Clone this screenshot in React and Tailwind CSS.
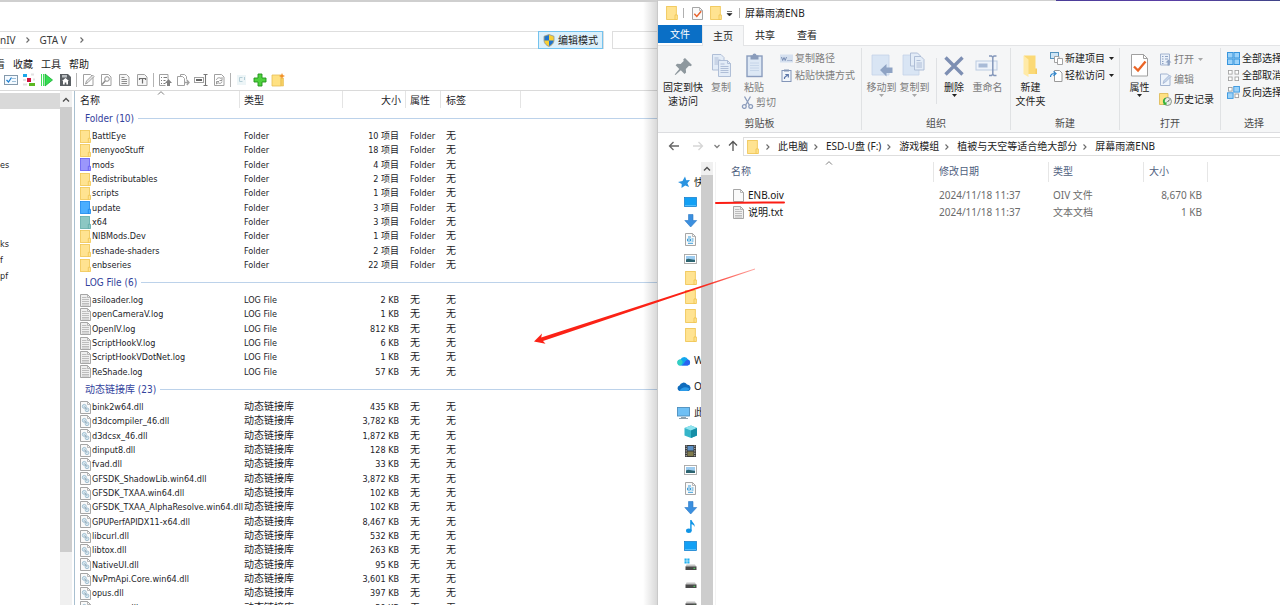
import React from "react";

/* ---------- small shared icons ---------- */

function Folder({ tone = "yellow", className = "w-[11px] h-[13px]" }) {
  const tones = {
    yellow: ["#ffe391", "#f0c552"],
    violet: ["#9a96fb", "#6259f2"],
    blue: ["#4aaeff", "#1787ee"],
    teal: ["#8cc7c3", "#5faaa8"],
  };
  const [fill, edge] = tones[tone];
  return (
    <svg className={className} viewBox="0 0 11 13" aria-hidden="true">
      <rect x="0.5" y="0.5" width="9" height="12" fill={fill} stroke={edge} strokeWidth="0.8" />
      <path d="M8.3 8.3h2.2v4.3H8.3z" fill={fill} stroke={edge} strokeWidth="0.8" />
    </svg>
  );
}

function Sheet({ kind = "text", className = "w-[11px] h-[13px]" }) {
  return (
    <svg className={className} viewBox="0 0 11 13" aria-hidden="true">
      <path d="M0.5 0.5h7L10.500 3.500v9H0.5z" fill={kind === "text" ? "#efefef" : "#fafafa"} stroke="#9c9c9c" strokeWidth="0.9" />
      <path d="M7.500 0.500v3h3" fill="none" stroke="#a8a8a8" strokeWidth="0.8" />
      {kind === "text" && <path d="M2 3.500h4.500M2 5.500h7M2 7.500h7M2 9.500h7M2 11h7" stroke="#b0b0b0" strokeWidth="0.8" />}
      {kind === "dll" && (
        <g fill="#d9eaf3" stroke="#94b6ca" strokeWidth="0.8">
          <circle cx="4.3" cy="5.4" r="2" />
          <circle cx="7" cy="8.800" r="1.900" />
          <path d="M4.300 5.400l2.700 3.400" stroke="#8f9ea8" />
        </g>
      )}
      {kind === "doc" && <path d="M3 4h3M2.500 6h3v2h-3zM6.500 6h2M6.500 8h2M3 10.300h5" fill="none" stroke="#3b9edb" strokeWidth="1" />}
      {kind === "check" && <path d="M2.300 6.800l2.500 2.600 4.400-5.200" fill="none" stroke="#e8622c" strokeWidth="1.5" />}
    </svg>
  );
}

function Chevron({ className = "w-[6px] h-[8px]" }) {
  return (
    <svg className={className} viewBox="0 0 6 8" aria-hidden="true">
      <path d="M1.5 1.5L4 4 1.5 6.5" fill="none" stroke="#6a6a6a" strokeWidth="1.1" />
    </svg>
  );
}

function UpMark({ className = "w-[8px] h-[6px]", stroke = "#505050", width = 1.4 }) {
  return (
    <svg className={className} viewBox="0 0 8 6" aria-hidden="true">
      <path d="M1 4.6L4 1.6l3 3" fill="none" stroke={stroke} strokeWidth={width} />
    </svg>
  );
}

function Caret({ color = "#222" }) {
  return (
    <svg className="w-[5px] h-[3px]" viewBox="0 0 5 3" aria-hidden="true">
      <path d="M0 0h5L2.5 3z" fill={color} />
    </svg>
  );
}

/* ---------- left window ---------- */

const page = "M2.500 1.500h7l2.500 2.500v8.500H2.500z";

function ToolIcon({ name }) {
  const g = { fill: "none", stroke: "#a0a0a0", strokeWidth: 1 };
  const art = {
    options: (
      <g>
        <rect x="0.5" y="2.500" width="13" height="9" fill="#f4faff" stroke="#8499ab" />
        <path d="M2.500 7l2 2 3-4.500" fill="none" stroke="#1f7fd0" strokeWidth="1.3" />
        <path d="M8 5.500h4M8 8.500h4" stroke="#9dbfd8" />
      </g>
    ),
    blocks: (
      <g>
        <rect x="1" y="1" width="4" height="3" fill="#1ba8e8" />
        <rect x="5" y="5" width="4" height="4" fill="#d0123e" />
        <rect x="7" y="10" width="6" height="3" fill="#5cb822" />
        <path d="M9 1.500h3M1 7h3M1 11.500h4M11 6.500h2" stroke="#e2e2e2" strokeWidth="2" />
      </g>
    ),
    play: (
      <g>
        <path d="M1.500 1v12M3.500 1v12" stroke="#3fe058" strokeWidth="1" />
        <path d="M5 1l7.500 6L5 13z" fill="#35dc50" stroke="#17ad32" strokeWidth="0.8" />
      </g>
    ),
    save: (
      <g>
        <path d="M2 1h8l3 3v9H2z" fill="#5a5f63" />
        <rect x="4" y="2" width="5" height="2.500" fill="#b9bdc0" />
        <path d="M4 8l3.500-3L11 8h-1v3.500H8.300V9.500H6.700v2H5V8z" fill="#fff" />
      </g>
    ),
    edit: (
      <g {...g}>
        <path d={page} />
        <path d="M4.500 11l1-3 6-6 1.500 1.500-6 6z" fill="#e8e8e8" stroke="#8c8c8c" strokeWidth="0.8" />
      </g>
    ),
    find: (
      <g {...g}>
        <path d={page} />
        <circle cx="8" cy="6" r="2.300" stroke="#8c8c8c" />
        <path d="M6.300 7.700L3 11.500" stroke="#8c8c8c" strokeWidth="1.400" />
      </g>
    ),
    text: (
      <g {...g}>
        <path d={page} fill="#f6f6f6" />
        <path d="M4.500 4.500h3M4.500 6.500h5.500M4.500 8.500h5.500M4.500 10.500h5.500" stroke="#8c8c8c" />
      </g>
    ),
    font: (
      <g {...g}>
        <path d={page} fill="#f6f6f6" />
        <path d="M4.500 5.500h6M4.500 5v2M10.500 5v2M7.500 5.500V10.500" stroke="#6c6c6c" strokeWidth="1.200" />
      </g>
    ),
    exportList: (
      <g {...g}>
        <path d="M1.500 12.500v-11h8.500v5M1.500 12.500h6" />
        <path d="M3 4.500h1M5.500 4.500h3.500M3 7.500h1M5.500 7.500h2M3 10.500h1M5.500 10.500h2" stroke="#7a7a7a" />
        <path d="M10.500 6l3.500 4h-2v3H9v-3H7z" fill="#808080" stroke="none" />
      </g>
    ),
    copyTo: (
      <g {...g}>
        <path d="M1.500 3.500h5l2 2v7h-7z" />
        <path d="M4.500 3V1.500h4l2 2v3" />
        <path d="M8 9.500h5M10.800 7l2.200 2.500-2.200 2.500" strokeWidth="1.400" />
      </g>
    ),
    rename: (
      <g {...g}>
        <rect x="0.5" y="4.500" width="9" height="5" />
        <rect x="2" y="6" width="6" height="2" fill="#666" stroke="none" />
        <path d="M9.500 1.500h4M11.500 1.500v11M9.500 12.500h4" stroke="#777" strokeWidth="1.100" />
      </g>
    ),
    refresh: (
      <g {...g}>
        <path d={page} />
        <path d="M4.500 7c0-2 3-3 4.500-1.500L10 4.500v3H7.500M10 8.500c0 1.700-2.500 2.500-4 1.200L4.500 11V8.500h2.500" stroke="#8c8c8c" strokeWidth="0.9" />
      </g>
    ),
    faded: (
      <g>
        <rect x="2" y="2" width="9" height="10" fill="#edf5f7" />
        <path d="M7.500 4.500h-3v4h3M9.500 4v3" fill="none" stroke="#b5ced7" />
      </g>
    ),
    add: <path d="M5 1h4v4h4v4H9v4H5V9H1V5h4z" fill="#4fd13e" stroke="#21921b" strokeWidth="0.9" />,
    newFolder: (
      <g>
        <path d="M1 2h9v11H1z" fill="#ffe182" stroke="#e6be55" strokeWidth="0.8" />
        <path d="M10 5h2.500v8H10z" fill="#f6cf62" stroke="#e6be55" strokeWidth="0.6" />
        <path d="M11 0l.9 2.100 2.100.9-2.100.9L11 6l-.9-2.100L8 3l2.100-.9z" fill="#f2922a" />
      </g>
    ),
  };
  return (
    <svg className="w-[14px] h-[14px]" viewBox="0 0 14 14" aria-hidden="true">
      {art[name]}
    </svg>
  );
}

const toolGroups = [
  [["options", "选项"], ["blocks", "归档"], ["play", "运行"], ["save", "保存"]],
  [["edit", "编辑"], ["find", "查看"], ["text", "文本"], ["font", "字体"]],
  [["exportList", "导出"], ["copyTo", "复制"], ["rename", "重命名"], ["refresh", "替换"]],
  [["faded", "属性"], ["add", "添加"], ["newFolder", "新建文件夹"]],
];

const groups = [
  {
    title: "Folder (10)",
    type: "Folder",
    attr: "Folder",
    rows: [
      ["BattlEye", "10 项目"],
      ["menyooStuff", "18 项目"],
      ["mods", "4 项目", "violet"],
      ["Redistributables", "2 项目"],
      ["scripts", "1 项目"],
      ["update", "3 项目", "blue"],
      ["x64", "3 项目", "teal"],
      ["NIBMods.Dev", "1 项目"],
      ["reshade-shaders", "2 项目"],
      ["enbseries", "22 项目"],
    ],
  },
  {
    title: "LOG File (6)",
    type: "LOG File",
    attr: "无",
    icon: "text",
    rows: [
      ["asiloader.log", "2 KB"],
      ["openCameraV.log", "1 KB"],
      ["OpenIV.log", "812 KB"],
      ["ScriptHookV.log", "6 KB"],
      ["ScriptHookVDotNet.log", "1 KB"],
      ["ReShade.log", "57 KB"],
    ],
  },
  {
    title: "动态链接库 (23)",
    type: "动态链接库",
    attr: "无",
    icon: "dll",
    rows: [
      ["bink2w64.dll", "435 KB"],
      ["d3dcompiler_46.dll", "3,782 KB"],
      ["d3dcsx_46.dll", "1,872 KB"],
      ["dinput8.dll", "128 KB"],
      ["fvad.dll", "33 KB"],
      ["GFSDK_ShadowLib.win64.dll", "3,872 KB"],
      ["GFSDK_TXAA.win64.dll", "102 KB"],
      ["GFSDK_TXAA_AlphaResolve.win64.dll", "102 KB"],
      ["GPUPerfAPIDX11-x64.dll", "8,467 KB"],
      ["libcurl.dll", "532 KB"],
      ["libtox.dll", "263 KB"],
      ["NativeUI.dll", "95 KB"],
      ["NvPmApi.Core.win64.dll", "3,601 KB"],
      ["opus.dll", "397 KB"],
      ["opusenc.dll", "59 KB"],
    ],
  },
];

function cellFont(text) {
  return /[\u4e00-\u9fff]/.test(text) ? "text-[10px]" : "text-[9px]";
}

function ArchiveTable() {
  const head = "h-[17px] p-0 font-normal text-[10px] text-left border-r border-[#e4e4e4]";
  return (
    <table className="w-full table-fixed border-separate border-spacing-0 leading-[14px] text-[#1c1c28] whitespace-nowrap">
      <colgroup>
        <col className="w-[165px]" />
        <col className="w-[103px]" />
        <col className="w-[63px]" />
        <col className="w-[35px]" />
        <col className="w-[80px]" />
        <col />
      </colgroup>
      <thead>
        <tr>
          <th className={head}>
            <div className="relative pl-[5px] pt-[3px]">
              名称
              <UpMark className="absolute left-1/2 top-0 -mt-[1px] w-[8px] h-[6px]" stroke="#808080" width={1} />
            </div>
          </th>
          <th className={head}><div className="pl-[4px] pt-[3px]">类型</div></th>
          <th className={head}><div className="pr-[4px] pt-[3px] text-right">大小</div></th>
          <th className={head}><div className="pl-[4px] pt-[3px]">属性</div></th>
          <th className={head}><div className="pl-[5px] pt-[3px]">标签</div></th>
          <th className="p-0" aria-hidden="true" />
        </tr>
      </thead>
      {groups.map((g) => (
        <React.Fragment key={g.title}>
          <tbody>
            <tr>
              <th colSpan={6} className="h-[21px] p-0 font-normal text-left">
                <div className="flex items-center gap-[4px] pl-[10px] text-[10px] text-[#32429c]">
                  {g.title}
                  <span className="flex-1 h-px bg-[#bcd2ea]" />
                </div>
              </th>
            </tr>
          </tbody>
          <tbody>
            {g.rows.map(([name, size, tone]) => (
              <tr key={name} className="h-[14px] nth-[3n]:h-[15px]">
                <td className="p-0">
                  <div className="flex items-center gap-[1px] pl-[5px] h-[14px] text-[9px]">
                    {g.icon ? <Sheet kind={g.icon} className="w-[11px] h-[13px] shrink-0" /> : <Folder tone={tone} className="w-[11px] h-[13px] shrink-0" />}
                    {name}
                  </div>
                </td>
                <td className="p-0"><div className={`h-[14px] pl-[4px] ${cellFont(g.type)}`}>{g.type}</div></td>
                <td className="p-0"><div className="h-[14px] pr-[7px] text-right text-[9px]">{size}</div></td>
                <td className="p-0"><div className={`h-[14px] pl-[4px] ${cellFont(g.attr)}`}>{g.attr}</div></td>
                <td className="p-0"><div className="h-[14px] pl-[5px] text-[10px]">无</div></td>
                <td className="p-0" />
              </tr>
            ))}
          </tbody>
        </React.Fragment>
      ))}
    </table>
  );
}

function Shield() {
  return (
    <svg className="w-[12px] h-[13px]" viewBox="0 0 12 13" aria-hidden="true">
      <path d="M6 0.500l5 1.800v4c0 3-2.200 5-5 6.200C3.200 11.300 1 9.300 1 6.300v-4z" fill="#f8cf34" stroke="#8d949b" strokeWidth="0.8" />
      <path d="M6 1v5.500H1.400V2.600z" fill="#1f74cf" />
      <path d="M6 6.500h4.600C10.400 9 8.500 11 6 12z" fill="#1f74cf" />
    </svg>
  );
}

function LeftWindow() {
  return (
    <section className="relative flex min-w-0 flex-col overflow-hidden border-t-2 border-[#cfcfcf] bg-white font-['DejaVu_Sans_Condensed','Noto_Sans_CJK_SC',sans-serif]">
      <div className="mt-[29px] flex h-[18px] shrink-0 gap-[8px] font-['Noto_Sans','Noto_Sans_CJK_SC',sans-serif] text-[10px] text-[#3a3a3a]">
        <div className="flex min-w-0 flex-1 items-stretch border-y border-r border-[#dedede]">
          <nav aria-label="路径" className="flex flex-1 items-center gap-[9px]">
            <a href="#openiv">nIV</a>
            <Chevron />
            <span className="flex items-center gap-[12px]">
              <a href="#gtav">GTA V</a>
              <Chevron />
            </span>
          </nav>
          <button className="-my-px flex items-center gap-[3px] border border-[#74c3ee] bg-[#dcf0fb] px-[4px] text-[#222]">
            <Shield />
            编辑模式
          </button>
        </div>
        <input aria-label="搜索" className="w-[45px] border-y border-l border-[#dedede] outline-none" />
      </div>

      <div className="mt-[7px] flex h-[16px] shrink-0 items-center gap-[8px] text-[10px] text-[#1a1a1a]">
        <button className="-ml-[5px]">看</button>
        <button>收藏</button>
        <button>工具</button>
        <button>帮助</button>
      </div>

      <div className="flex h-[19px] shrink-0 items-start border-b border-[#dadada] pl-[2px] pt-[1px]">
        {toolGroups.map((group, i) => (
          <React.Fragment key={i}>
            {i > 0 && <span className="mx-[2px] h-[14px] w-px bg-[#b3b3b3]" />}
            {group.map(([name, label]) => (
              <button key={name} aria-label={label} className="flex w-[18px] justify-center">
                <ToolIcon name={name} />
              </button>
            ))}
          </React.Fragment>
        ))}
      </div>

      <div className="flex min-h-0 flex-1">
        <ul className="w-[60px] shrink-0 pt-[2px] text-[9px] leading-[16px] text-[#1c1c28]">
          <li className="mb-[48px] h-[16px] bg-[#d9d9d9]" />
          <li className="mb-[63px]">es</li>
          <li>ks</li>
          <li>f</li>
          <li>pf</li>
        </ul>
        <div className="flex w-[12px] shrink-0 flex-col bg-[#f0f0f0] pt-[2px]">
          <div className="flex h-[14px] shrink-0 items-center justify-center">
            <UpMark />
          </div>
          <div className="h-[87%] bg-[#cdcdcd]" />
        </div>
        <div className="ml-[2px] min-w-0 flex-1 overflow-hidden border-l border-[#a9c0d0]">
          <ArchiveTable />
        </div>
      </div>
      <div className="pointer-events-none absolute inset-y-0 right-0 w-[14px] bg-linear-to-r from-transparent to-black/15" />
    </section>
  );
}

/* ---------- right window: ribbon ---------- */

const pageFill = "#e3ecf7";
const pageEdge = "#a9b9d3";

function Copies({ x = 0, y = 0 }) {
  return (
    <g transform={`translate(${x} ${y})`} fill={pageFill} stroke={pageEdge} strokeWidth="0.9">
      <path d="M0.500 0.500h8.500l3 3v12.500H0.500z" />
      <path d="M2.500 4h4M2.500 6h6M2.500 8h6M2.500 10h6" />
      <path d="M6.500 6.500h9l3 3V22.500h-12z" />
      <path d="M15.500 6.500v3h3M8.500 10h4M8.500 12.500h8M8.500 14.500h8M8.500 16.500h8M8.500 18.500h8" fill="none" />
    </g>
  );
}

function RibbonIcon({ name }) {
  const art = {
    pin: (
      <g transform="translate(0 3)">
        <path d="M14 3l7 7-1.500 1.200-1.500-.4-3.200 3.200.3 3.400-1.600 1.600-3.700-3.700L4.500 20l-.8-.6 4.600-5.500-3.700-3.600 1.600-1.600 3.400.3 3.100-3.100-.4-1.600z" fill="#8e989e" />
      </g>
    ),
    copy: <Copies x={3} y={2} />,
    paste: (
      <g>
        <rect x="5" y="4" width="15" height="20.500" fill="#dde8f5" stroke="#8b9dbe" strokeWidth="1.400" />
        <path d="M8.500 3.500h2a2 2 0 014 0h2v4h-8z" fill="#8a9cbb" />
        <path d="M8 11h9M8 13.500h9M8 16h9M8 18.500h9" stroke="#c2d1e6" strokeWidth="0.800" />
      </g>
    ),
    moveTo: (
      <g>
        <path d="M3 3h17v20H3z" fill="#d9e5f4" stroke="#c4d3e8" strokeWidth="0.800" />
        <path d="M11 18l6.500-6v3.500h6v5.500h-6v3.500z" fill="#8fa3c4" />
      </g>
    ),
    copyTo: (
      <g>
        <path d="M1 3h16v20H1z" fill="#d9e5f4" stroke="#c4d3e8" strokeWidth="0.800" />
        <g fill={pageFill} stroke={pageEdge} strokeWidth="0.900">
          <path d="M8.500 1h7l3 3v10h-10z" />
          <path d="M12.500 4.500h6.500l3 3V18h-9.500z" />
          <path d="M14.500 8.500h4M14.500 11h5.500M14.500 13h5.500M14.500 15h5.500" />
        </g>
      </g>
    ),
    remove: <path d="M3.500 5.500l17 17M20.500 5.500l-17 17" stroke="#7d8fb3" strokeWidth="3.400" />,
    rename: (
      <g fill="none">
        <rect x="1" y="9" width="21" height="9" fill="#eef3fa" stroke="#bccbe2" />
        <rect x="3.500" y="11.500" width="9" height="4" fill="#a9bbd7" />
        <path d="M14 4h2.500l1.300 1.200L19 4h2.500M17.800 5v17M14 23.500h2.500l1.300-1.200 1.200 1.200h2.500" stroke="#8497ba" strokeWidth="1.500" />
      </g>
    ),
    newFolder: (
      <g>
        <path d="M16 16.500h3V22h-3z" fill="#f5cc62" />
        <path d="M6 3.500h11.500V22H9z" fill="#fbd976" />
        <path d="M5.500 3.500l5 4V25l-5-3z" fill="#ffeaa8" />
      </g>
    ),
    properties: (
      <g>
        <path d="M4.500 2.500h12l4 4v17.500h-16z" fill="#fff" stroke="#a0a0a0" />
        <path d="M16.500 2.500v4h4" fill="none" stroke="#a0a0a0" />
        <path d="M7 14.500l4 4 7.500-9" fill="none" stroke="#ea6425" strokeWidth="2.300" />
      </g>
    ),
  };
  return (
    <svg className="w-[25px] h-[28px] shrink-0" viewBox="0 0 25 28" aria-hidden="true">
      {art[name]}
    </svg>
  );
}

function MiniIcon({ name }) {
  const art = {
    path: (
      <g>
        <rect x="0" y="2.500" width="13" height="8" fill="#d5e0ef" />
        <path d="M1.500 5l1.200 3.500L4 5.500l1.200 3L6.500 5M7.500 8.500h1M9.500 8.500h1M11.300 8.500h.8" fill="none" stroke="#6f86ae" strokeWidth="0.900" />
      </g>
    ),
    shortcut: (
      <g>
        <rect x="2" y="1.500" width="9" height="11" fill="#f2f6fb" stroke="#8496b8" />
        <rect x="4" y="0.500" width="5" height="2" fill="#8496b6" />
        <path d="M4.500 10V8.500L7.500 6M5.300 5.500h3v3" fill="none" stroke="#5c76a8" strokeWidth="1.200" />
      </g>
    ),
    cut: (
      <g fill="none" stroke="#8b9cbc">
        <path d="M3.500 0.500l4.800 8.500M9.500 0.500L4.700 9" strokeWidth="1.300" />
        <circle cx="3.300" cy="10.500" r="1.900" strokeWidth="1.300" />
        <circle cx="9.700" cy="10.500" r="1.900" strokeWidth="1.300" />
      </g>
    ),
    newItem: (
      <g>
        <rect x="0.500" y="0.500" width="8" height="6" fill="#cfe6f6" stroke="#5593bd" />
        <path d="M4.500 4.500h4.500v6h-4.500z" fill="#fff" stroke="#9a9a9a" strokeWidth="0.900" />
        <path d="M7.500 6.500h5v6h-5z" fill="#fff" stroke="#9a9a9a" strokeWidth="0.900" />
      </g>
    ),
    easy: (
      <g>
        <path d="M4.500 1.500h5l2.500 2.500v8.500H4.500z" fill="#fff" stroke="#9a9a9a" />
        <path d="M0.500 8c0-2.500 1-3.500 4-3.500M3.500 2.500l2.500 2-2.500 2.200" fill="none" stroke="#2c86cf" strokeWidth="1.200" />
      </g>
    ),
    open: (
      <g>
        <path d="M1.500 1h9v11h-9z" fill="#e9f0f9" stroke="#a3b4d0" />
        <path d="M3 3.500h1.500M6 3.500h3M3 6h1.500M6 6h3M3 8.500h1.500M3 10.500h1.500" stroke="#8fa3c4" />
        <path d="M9.500 6.500l3 3h-2v3h-2v-3h-2z" fill="#8fa3c4" />
      </g>
    ),
    edit: (
      <g>
        <path d="M1.500 1h7l2.500 2.500V12.500H1.500z" fill="#eef4fb" stroke="#a3b4d0" />
        <path d="M4 10.500l1-3 5.500-5.500 1.500 1.500-5.500 5.500z" fill="#c7d6eb" stroke="#a3b4d0" strokeWidth="0.800" />
      </g>
    ),
    history: (
      <g>
        <path d="M0.500 0.500h8.500v11H0.500z" fill="#ffe182" stroke="#dcb64e" strokeWidth="0.800" />
        <circle cx="8.500" cy="8.500" r="4" fill="#e6ebe6" stroke="#828c82" strokeWidth="0.900" />
        <path d="M8.500 9l2.200-2.500" fill="none" stroke="#555" strokeWidth="1" />
        <path d="M6.500 4.800C3.500 6 3.300 9 5 11l-1.200.8h3.700V8.600L6.300 9.700C5.500 8.500 5.500 6.500 7 5.700z" fill="#36b33a" />
      </g>
    ),
    all: (
      <g fill="#9bd2f9" stroke="#3795dd">
        <rect x="0.500" y="0.500" width="5.500" height="5.500" />
        <rect x="7" y="0.500" width="5.500" height="5.500" />
        <rect x="0.500" y="7" width="5.500" height="5.500" />
        <rect x="7" y="7" width="5.500" height="5.500" />
      </g>
    ),
    none: (
      <g fill="#fff" stroke="#9c9c9c" strokeWidth="0.800">
        <rect x="1.500" y="1.500" width="3.600" height="3.600" />
        <rect x="8" y="1.500" width="3.600" height="3.600" />
        <rect x="1.500" y="8" width="3.600" height="3.600" />
        <rect x="8" y="8" width="3.600" height="3.600" />
      </g>
    ),
    invert: (
      <g strokeWidth="0.900">
        <rect x="1.500" y="1.500" width="3.600" height="3.600" fill="#fff" stroke="#9c9c9c" />
        <rect x="6.800" y="0.500" width="5.600" height="5.600" fill="#9bd2f9" stroke="#3795dd" />
        <rect x="0.500" y="6.800" width="5.600" height="5.600" fill="#9bd2f9" stroke="#3795dd" />
        <rect x="8" y="8" width="3.600" height="3.600" fill="#fff" stroke="#9c9c9c" />
      </g>
    ),
  };
  return (
    <svg className="w-[13px] h-[13px] shrink-0" viewBox="0 0 13 13" aria-hidden="true">
      {art[name]}
    </svg>
  );
}

function Big({ icon, lines, width, muted, caret }) {
  return (
    <button className={`mt-[2px] flex flex-col items-center ${width} ${muted ? "text-[#7d7d7d]" : "text-[#222]"}`}>
      <RibbonIcon name={icon} />
      {lines.map((l) => (
        <span key={l} className="leading-[14px]">{l}</span>
      ))}
      {caret && <Caret color={muted ? "#a8a8a8" : "#222"} />}
    </button>
  );
}

function Small({ icon, label, muted, caret }) {
  return (
    <button className={`flex h-[17px] items-center gap-[2px] ${muted ? "text-[#7d7d7d]" : "text-[#222]"}`}>
      <MiniIcon name={icon} />
      {label}
      {caret && <span className="ml-[2px]"><Caret color={muted ? "#a8a8a8" : "#222"} /></span>}
    </button>
  );
}

function RibbonGroup({ title, width, children }) {
  return (
    <div className={`flex shrink-0 flex-col ${width}`}>
      <div className="flex h-[66px] items-start pt-[2px]">{children}</div>
      <div className="pt-[3px] text-center leading-[14px] text-[#4c4c4c]">{title}</div>
    </div>
  );
}

function Ribbon() {
  return (
    <div className="flex h-[87px] shrink-0 overflow-hidden whitespace-nowrap border-b border-[#dcdde0] bg-[#f5f6f7]">
      <div className="flex py-[2px] divide-x divide-[#e0e2e4]">
        <RibbonGroup title="剪贴板" width="w-[204px]">
          <Big icon="pin" lines={["固定到快", "速访问"]} width="w-[50px]" />
          <Big icon="copy" lines={["复制"]} width="w-[26px]" muted />
          <div className="ml-[7px] flex w-[39px] flex-col items-start">
            <Big icon="paste" lines={["粘贴"]} width="w-[26px]" muted />
            <Small icon="cut" label="剪切" muted />
          </div>
          <div className="flex flex-col">
            <Small icon="path" label="复制路径" muted />
            <Small icon="shortcut" label="粘贴快捷方式" muted />
          </div>
        </RibbonGroup>
        <RibbonGroup title="组织" width="w-[149px]">
          <div className="flex pl-[3px]">
            <Big icon="moveTo" lines={["移动到"]} width="w-[33px]" muted caret />
            <Big icon="copyTo" lines={["复制到"]} width="w-[33px]" muted caret />
          </div>
          <span className="ml-[5px] mt-[8px] h-[46px] w-px bg-[#dfe1e4]" />
          <Big icon="remove" lines={["删除"]} width="w-[34px]" caret />
          <Big icon="rename" lines={["重命名"]} width="w-[33px]" muted />
        </RibbonGroup>
        <RibbonGroup title="新建" width="w-[109px]">
          <Big icon="newFolder" lines={["新建", "文件夹"]} width="w-[39px]" />
          <div className="flex flex-col">
            <Small icon="newItem" label="新建项目" caret />
            <Small icon="easy" label="轻松访问" caret />
          </div>
        </RibbonGroup>
        <RibbonGroup title="打开" width="w-[101px]">
          <Big icon="properties" lines={["属性"]} width="w-[39px]" caret />
          <div className="flex flex-col gap-[3px] pt-[1px]">
            <Small icon="open" label="打开" muted caret />
            <Small icon="edit" label="编辑" muted />
            <Small icon="history" label="历史记录" />
          </div>
        </RibbonGroup>
        <RibbonGroup title="选择" width="w-[66px]">
          <div className="flex flex-col pl-[6px]">
            <Small icon="all" label="全部选择" />
            <Small icon="none" label="全部取消" />
            <Small icon="invert" label="反向选择" />
          </div>
        </RibbonGroup>
      </div>
    </div>
  );
}

/* ---------- right window: navigation and files ---------- */

function NavIcon({ name }) {
  const art = {
    star: <path d="M9 1.500l1.300 3.800 3.700-.3-2.600 3.200 1.700 3.800-3.900-1.500L5.500 13l.2-4L2 7l4.500-.9z" fill="#2a93e0" />,
    desktop: (
      <g>
        <rect x="1.500" y="3.500" width="12" height="9" fill="#12a0f5" stroke="#0c78c8" strokeWidth="0.700" />
        <path d="M2 11.500h11" stroke="#5fc3fb" strokeWidth="0.800" />
      </g>
    ),
    down: <path d="M5.500 1.500h4.500v6h3.700L7.700 14 1.800 7.500h3.700z" fill="#3a8fdf" stroke="#2b78c4" strokeWidth="0.600" />,
    picture: (
      <g>
        <rect x="1.500" y="3.500" width="12" height="9" fill="#fff" stroke="#a6a6a6" strokeWidth="0.900" />
        <rect x="3" y="5" width="9" height="6" fill="#9dccf0" />
        <path d="M3 11V8.500c3-2 5 .5 9 .2V11z" fill="#2c6470" />
      </g>
    ),
    cloudA: (
      <g>
        <path d="M4.500 12.500A3 3 0 014.500 6.500 4 4 0 0112 6.500 3.100 3.100 0 0111.500 12.500z" fill="#12a6ee" />
        <path d="M4.500 12.500c4 0 4-5.500 7.500-6A3.100 3.100 0 0111.500 12.500z" fill="#2a63f0" />
        <path d="M4.500 12.500a3 3 0 01-.4-6c3 .4 3.500 3.500 .4 6z" fill="#33d0c0" />
      </g>
    ),
    cloudB: (
      <g>
        <path d="M3.500 12A2.900 2.900 0 013.500 6.500 4.200 4.200 0 0111 5.500a3.400 3.400 0 011.500 6.500z" fill="#0f6cbd" />
        <path d="M3.500 12c2-4 6-4.500 10-2.500a2.600 2.600 0 01-2.500 2.500z" fill="#2a9ae8" />
      </g>
    ),
    pc: (
      <g>
        <rect x="1.500" y="2.500" width="12" height="8.500" fill="#6fc0f5" stroke="#4d8fbd" strokeWidth="0.900" />
        <path d="M5 12.500h5M3 13.500h9" stroke="#8fa1ad" strokeWidth="1" />
      </g>
    ),
    cube: (
      <g>
        <path d="M1.500 4L8 1.500 14 4v7.500L8 14 1.500 11.500z" fill="#35b5c9" />
        <path d="M1.500 4L8 6.500 14 4 8 1.500z" fill="#8fe3ee" />
        <path d="M8 6.500V14l6-2.500V4z" fill="#168ea6" />
      </g>
    ),
    video: (
      <g>
        <rect x="2" y="2" width="11" height="12" fill="#3a3a3a" />
        <rect x="4.500" y="3" width="6" height="4.500" fill="#5b8fc4" />
        <rect x="4.500" y="8.500" width="6" height="4.500" fill="#7f7a4d" />
        <path d="M3.200 2.500v11M11.800 2.500v11" stroke="#ddd" strokeWidth="0.900" strokeDasharray="1.200 1.200" />
      </g>
    ),
    music: (
      <g>
        <ellipse cx="5.800" cy="11.800" rx="2.800" ry="2.200" fill="#0f94e6" />
        <path d="M7.200 1h1.400c.2 2.500 3.600 3 3 7-.7-2-1.700-2.600-3-2.800V12H7.200z" fill="#0f94e6" />
      </g>
    ),
    system: (
      <g>
        <path d="M1.500 1.500h2.200v2.200H1.500zM4.300 1.500h2.200v2.200H4.300zM1.500 4.300h2.200v2.200H1.500zM4.300 4.300h2.200v2.200H4.300z" fill="#1fb0f0" />
        <path d="M3.500 7.500h8.500l1.500 2.500h-11z" fill="#c4c4c4" />
        <rect x="2.500" y="9.500" width="11" height="3.500" fill="#4a4a4a" />
        <rect x="10.500" y="10.800" width="1.600" height="1" fill="#52e060" />
      </g>
    ),
    drive: (
      <g>
        <path d="M3.500 6.500h8.500l1.500 2.500h-11z" fill="#c4c4c4" />
        <rect x="2.500" y="8.500" width="11" height="3.500" fill="#4a4a4a" />
        <rect x="10.500" y="9.800" width="1.600" height="1" fill="#52e060" />
      </g>
    ),
  };
  if (name === "folder") return <span className="flex w-[15px] justify-center"><Folder className="w-[12px] h-[14px]" /></span>;
  if (name === "doc") return <span className="flex w-[15px] justify-center"><Sheet kind="doc" className="w-[11px] h-[13px]" /></span>;
  return (
    <svg className="w-[15px] h-[15px] shrink-0" viewBox="0 0 15 15" aria-hidden="true">
      {art[name]}
    </svg>
  );
}

const navTree = [
  { icon: "star", label: "快", children: ["desktop", "down", "doc", "picture", "folder", "folder", "folder", "folder"] },
  { icon: "cloudA", label: "W", children: [] },
  { icon: "cloudB", label: "O", children: [] },
  { icon: "pc", label: "此", children: ["cube", "video", "picture", "doc", "down", "music", "desktop", "system", "drive", "drive"] },
];

function NavPane() {
  return (
    <ul className="flex w-[43px] shrink-0 flex-col gap-[7px] overflow-hidden pt-[11px] text-[10px] text-[#222]">
      {navTree.map((n) => (
        <li key={n.label} className="shrink-0">
          <div className="flex h-[19px] items-center gap-[3px] overflow-hidden pl-[18px]">
            <NavIcon name={n.icon} />
            <span className="whitespace-nowrap">{n.label}</span>
          </div>
          <ul>
            {n.children.map((c, i) => (
              <li key={i} className="flex h-[19px] items-center pl-[25px]">
                <NavIcon name={c} />
              </li>
            ))}
          </ul>
        </li>
      ))}
    </ul>
  );
}

function FileTable() {
  const th = "p-0 h-[25px] align-top font-normal text-left";
  const cell = "h-[20px] border-r border-[#e6e6e6] leading-[19px]";
  return (
    <table className="w-full table-fixed border-separate border-spacing-0 text-[10px] text-[#6b6b6b] whitespace-nowrap">
      <colgroup>
        <col className="w-[218px]" />
        <col className="w-[115px]" />
        <col className="w-[95px]" />
        <col className="w-[64px]" />
        <col />
      </colgroup>
      <thead className="text-[#4f6080]">
        <tr>
          <th className={th}>
            <div className={`${cell} relative pl-[15px]`}>
              名称
              <UpMark className="absolute left-1/2 -top-[2px] w-[8px] h-[6px]" stroke="#808080" width={1} />
            </div>
          </th>
          <th className={th}><div className={`${cell} pl-[5px]`}>修改日期</div></th>
          <th className={th}><div className={`${cell} pl-[4px]`}>类型</div></th>
          <th className={th}><div className={`${cell} pl-[5px]`}>大小</div></th>
          <th className={th} aria-hidden="true" />
        </tr>
      </thead>
      <tbody>
        {[
          ["ENB.oiv", "OIV 文件", "8,670 KB", "blank"],
          ["说明.txt", "文本文档", "1 KB", "text"],
        ].map(([name, type, size, kind]) => (
          <tr key={name} className="h-[17px] leading-[17px]">
            <td className="p-0">
              <div className="flex h-[17px] items-center gap-[4px] pl-[17px] text-[#161616]">
                <Sheet kind={kind} />
                {name}
              </div>
            </td>
            <td className="p-0 pl-[5px]">2024/11/18 11:37</td>
            <td className="p-0 pl-[4px]">{type}</td>
            <td className="p-0 pr-[6px] text-right">{size}</td>
            <td className="p-0" />
          </tr>
        ))}
      </tbody>
    </table>
  );
}

function RightWindow() {
  const crumbs = ["此电脑", "ESD-U盘 (F:)", "游戏模组", "植被与天空等适合绝大部分", "屏幕雨滴ENB"];
  return (
    <section className="flex min-w-0 flex-col overflow-hidden border-l border-[#c9c9c9] bg-white font-['Noto_Sans','Noto_Sans_CJK_SC',sans-serif] text-[10px] text-[#222]">
      <div className="flex h-px shrink-0">
        <span className="w-[64%] bg-[#cfcfcf]" />
        <span className="flex-1 bg-linear-to-r from-[#4a3d98] via-[#5b3fa6] to-[#3f4488]" />
      </div>
      <header className="flex h-[24px] shrink-0 items-center pl-[8px]">
        <Folder className="w-[12px] h-[14px]" />
        <span className="ml-[5px] h-[10px] w-px bg-[#b0b0b0]" />
        <Sheet kind="check" className="ml-[8px] w-[11px] h-[13px]" />
        <Folder className="ml-[7px] w-[12px] h-[14px]" />
        <button aria-label="自定义快速访问工具栏" className="ml-[4px]">
          <svg className="w-[7px] h-[7px]" viewBox="0 0 7 7" aria-hidden="true">
            <path d="M1 1.500h5M1 3.500h5L3.500 6z" fill="#222" stroke="#222" strokeWidth="0.600" />
          </svg>
        </button>
        <span className="ml-[6px] h-[10px] w-px bg-[#b0b0b0]" />
        <h1 className="ml-[5px]">屏幕雨滴ENB</h1>
      </header>
      <nav aria-label="功能区" className="flex h-[21px] shrink-0 border-b border-[#e3e4e6] leading-[19px]">
        <button className="mb-[2px] w-[44px] bg-[#0a6fc6] text-white">文件</button>
        <button className="-mb-px w-[42px] border-x border-t border-[#e3e4e6] bg-[#f5f6f7]">主页</button>
        <button className="w-[42px]">共享</button>
        <button className="w-[42px]">查看</button>
      </nav>
      <Ribbon />
      <div className="flex h-[29px] shrink-0 pt-[4px]">
        <div className="flex h-[18px] w-[85px] shrink-0 items-center pl-[10px]">
          {[
            ["后退", "M11 6H1.500M5.500 2L1.500 6l4 4", "#666", "w-[24px]"],
            ["前进", "M1 6h9.500M6.500 2l4 4-4 4", "#d6d6d6", "w-[19px]"],
            ["最近浏览的位置", "M3.500 5L6 7.500 8.500 5", "#808080", "w-[16px]"],
            ["上移", "M6 11V1.500M2 5.500l4-4 4 4", "#555", "w-[16px]"],
          ].map(([label, d, color, width]) => (
            <button key={label} aria-label={label} className={width}>
              <svg className="w-[12px] h-[12px]" viewBox="0 0 12 12" aria-hidden="true">
                <path d={d} fill="none" stroke={color} strokeWidth="1.300" />
              </svg>
            </button>
          ))}
        </div>
        <nav aria-label="地址" className="flex h-[19px] min-w-0 flex-1 items-center overflow-hidden whitespace-nowrap border-y border-l border-[#dedede] pl-[3px]">
          <Folder className="mr-[1px] w-[12px] h-[14px] shrink-0" />
          {crumbs.map((c) => (
            <span key={c} className="flex items-center">
              <Chevron className="mx-[5px] h-[8px] w-[6px]" />
              <a href="#path" className="pl-[2px]">{c}</a>
            </span>
          ))}
        </nav>
      </div>
      <div className="flex min-h-0 flex-1">
        <NavPane />
        <div className="flex w-[12px] shrink-0 flex-col bg-[#cdcdcd]">
          <div className="flex h-[13px] items-center justify-center bg-[#f0f0f0]">
            <UpMark />
          </div>
        </div>
        <div className="ml-[2px] min-w-0 flex-1 border-l border-[#f3f3f3]">
          <FileTable />
        </div>
      </div>
    </section>
  );
}

/* ---------- red pen marks drawn over both windows ---------- */

function Marks() {
  return (
    <svg className="pointer-events-none absolute inset-0 h-full w-full" aria-hidden="true">
      <defs>
        <linearGradient id="fade" x1="0" x2="1" y1="0" y2="0">
          <stop offset="0.75" stopColor="#fb2216" />
          <stop offset="1" stopColor="#fb2216" stopOpacity="0.400" />
        </linearGradient>
      </defs>
      <path d="M534 341.500l8-8-.8 4L660 299.300 755 268.500v.9l-95 32.200L543 341l2.500 2.800z" fill="url(#fade)" />
      <path d="M716 203l68-.6" stroke="#fb1d14" strokeWidth="2" strokeLinecap="round" />
    </svg>
  );
}

export default function App() {
  return (
    <main className="relative grid h-screen grid-cols-[657fr_623fr] grid-rows-[minmax(0,1fr)] overflow-hidden bg-white">
      <LeftWindow />
      <RightWindow />
      <Marks />
    </main>
  );
}
